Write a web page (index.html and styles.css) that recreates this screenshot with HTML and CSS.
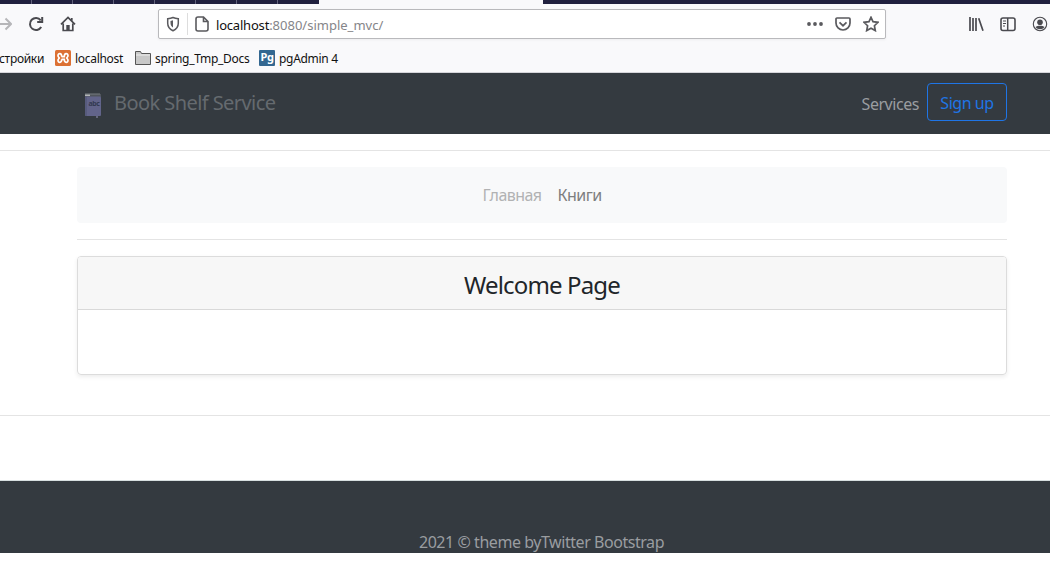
FILE: index.html
```html
<!DOCTYPE html>
<html lang="ru">
<head>
<meta charset="utf-8">
<title>Book Shelf Service</title>
<link rel="stylesheet" href="styles.css">
</head>
<body>
<div class="tabstrip"><div class="tabs"></div><div class="active-tab"></div></div>
<div class="toolbar">
  <div class="tools-left">
    <svg class="forward" width="16" height="16" viewBox="0 0 16 16"><path d="M1 8h14M9.500 2.500L15 8l-5.500 5.500"/></svg>
    <svg width="16" height="16" viewBox="0 0 16 16"><path d="M12.700 4.300A6 6 0 1 0 13.200 11"/><path d="M14.200 1v5H9.200" /></svg>
    <svg width="16" height="16" viewBox="0 0 16 16"><path d="M1 8.300L8 1.500l7 6.800M3.200 7.500v7h9.600v-7M11.800 2v3" stroke-width="1.700"/><path d="M6.300 14V9h3.400v5z" fill="#4a4a4f" stroke="none"/></svg>
  </div>
  <div class="address">
    <svg width="14" height="16" viewBox="0 0 14 16"><path d="M7 1.500c2 .8 3.500 1 5.300 1.200v4.500c0 3.500-2 6-5.300 7.500-3.300-1.500-5.300-4-5.300-7.500V2.700C3.500 2.500 5 2.300 7 1.500z" stroke-width="1.500"/><path d="M7 4.300v7.300c-1.500-1-2.500-2.500-2.500-4.500V4.900z" fill="#5a5a5e" stroke="none"/></svg>
    <span class="divider"></span>
    <svg class="page-icon" width="14" height="16" viewBox="0 0 14 16"><path d="M3 1h5.500L13 5.500V13a2 2 0 0 1-2 2H3a2 2 0 0 1-2-2V3a2 2 0 0 1 2-2zM8.500 1v4.500H13" stroke-width="1.600"/></svg>
    <span class="url"><b>localhost</b>:8080/simple_mvc/</span>
    <div class="address-actions">
      <svg width="16" height="16" viewBox="0 0 16 16"><g fill="#5a5a5e" stroke="none"><circle cx="2" cy="8" r="1.900"/><circle cx="8" cy="8" r="1.900"/><circle cx="14" cy="8" r="1.900"/></g></svg>
      <svg width="16" height="16" viewBox="0 0 16 16"><path d="M2 2h12a1 1 0 0 1 1 1v4a7 7 0 0 1-14 0V3a1 1 0 0 1 1-1z" stroke-width="1.700"/><path d="M4.500 6.300L8 9.700l3.500-3.400" stroke-width="1.700"/></svg>
      <svg width="16" height="16" viewBox="0 0 16 16"><path d="M8 1.300l2 4.400 5 .6-3.600 3.400.9 4.900L8 12.200l-4.300 2.400.9-4.900L1 6.300l5-.6z" stroke-width="1.700"/></svg>
    </div>
  </div>
  <div class="tools-right">
    <svg width="16" height="16" viewBox="0 0 16 16"><path d="M2 1v14M5 2v13M8 2v13M10.700 2.200L15 14.700" stroke-width="1.700"/></svg>
    <svg width="16" height="16" viewBox="0 0 16 16"><rect x="1" y="2" width="14" height="12.500" rx="2" stroke-width="1.600"/><path d="M7.700 2v12" stroke-width="1.500"/><path d="M3 5h3M3 7.500h3M3 10h2" stroke-width="1"/></svg>
    <svg width="16" height="16" viewBox="0 0 16 16"><circle cx="8" cy="8" r="6.700" stroke-width="1.100"/><circle cx="8" cy="6.200" r="2.800" fill="#4a4a4f" stroke="none"/><path d="M3.500 11c2-1.700 7-1.700 9 0-2 3-7 3-9 0z" fill="#4a4a4f" stroke="none"/></svg>
  </div>
</div>
<div class="bookmarks">
  <span class="mark mark-settings">стройки</span>
  <span class="mark mark-local"><svg width="16" height="16" viewBox="0 0 16 16"><rect width="16" height="16" rx="1.500" fill="#dc7033" stroke="none"/><path d="M6.500 6.700H10M6.500 9.300H10M6.700 6.700C6.700 2.500 3 3 3 5.700c0 1 .7 1.500 1.300 2.300C3.700 8.800 3 9.300 3 10.300 3 13 6.700 13.500 6.700 9.300M9.300 6.700c0-4.200 3.700-3.700 3.700-1 0 1-.7 1.500-1.300 2.300.6.800 1.300 1.300 1.300 2.300 0 2.700-3.700 3.200-3.700-1" stroke="#fff" stroke-width="1.700"/></svg><span>localhost</span></span>
  <span class="mark mark-docs"><svg width="16" height="16" viewBox="0 0 16 16"><path d="M.5 14.500v-13h5l1 2h9v11z" fill="#c8c8c8" stroke="#555" stroke-width="1"/><path d="M1 5h14" stroke="#eee" stroke-width="1"/></svg><span>spring_Tmp_Docs</span></span>
  <span class="mark mark-pg"><i class="pg">Pg</i><span>pgAdmin 4</span></span>
</div>
<header class="navbar">
  <div class="container navbar-row">
    <div class="brand">
      <svg width="18" height="26" viewBox="0 0 18 26"><path d="M1 1h16v3H1z" fill="#50555c" stroke="none"/><path d="M1 1h15" stroke="#777c80" stroke-width="1"/><path d="M1 2.300h5" stroke="#b2b5b5" stroke-width="1.500"/><rect x="1" y="3.500" width="16" height="19.500" rx="1" fill="#62648a" stroke="none"/><path d="M2 3.500V23" stroke="#555879" stroke-width="1.500"/><path d="M13 23v2" stroke="#777992" stroke-width="1.500"/><text x="4.500" y="13" class="book-label">abc</text></svg>
      <span>Book Shelf Service</span>
    </div>
    <div class="account"><a class="services">Services</a><a class="signup"><span>Sign up</span></a></div>
  </div>
</header>
<hr>
<main class="container">
  <nav class="menu"><a class="active"><span>Главная</span></a><a><span>Книги</span></a></nav>
  <hr>
  <section class="card"><h4><span>Welcome Page</span></h4><div class="card-body"></div></section>
</main>
<hr class="end-line">
<footer><span>2021 © theme byTwitter Bootstrap</span></footer>
</body>
</html>
```
FILE: styles.css
```css
* { box-sizing: border-box; }
body { margin: 0; height: 582px; overflow: hidden; background: #fff; color: #212529; font: 16px/24px "Noto Sans", "Open Sans", sans-serif; letter-spacing: -.45px; }
svg { display: block; flex: none; fill: none; stroke: #4a4a4f; stroke-width: 2; }
span { white-space: nowrap; }
.tabstrip { display: flex; height: 4px; background: #20203f; }
.tabs { width: 319px; background: repeating-linear-gradient(90deg, transparent 0 40px, #62627c 40px 41px) -9px 0; }
.active-tab { width: 224px; background: #f9f9fb; }
.toolbar { display: flex; align-items: center; height: 41px; background: #f9f9fb; }
.tools-left { display: flex; gap: 16px; width: 158px; margin-left: -4px; }
.tools-left svg { margin-top: -1px; }
.forward { stroke: #b6b6b9; }
.toolbar .address { display: flex; align-items: center; width: 728px; height: 30px; margin: -1px 0 0 4px; padding: 0 6px 0 7px; border: 1px solid #b9b9bc; border-radius: 2px; background: #fff; box-shadow: 0 1px 3px #0000000d; }
.address svg { stroke: #5a5a5e; }
.divider { width: 1px; height: 22px; margin: 0 7px; background: #ddd; }
.url { margin: 2px 0 0 7px; color: #858589; font-size: 13px; letter-spacing: 0; }
.url b { color: #111; font-weight: 400; letter-spacing: -.2px; }
.address-actions { display: flex; gap: 12px; margin-left: auto; }
.tools-right { display: flex; gap: 16px; margin: -2px 0 0 82px; }
.bookmarks { display: flex; align-items: center; height: 28px; background: #f9f9fb; border-bottom: 1px solid #d5d5da; color: #111; font-size: 12px; letter-spacing: -.3px; }
.mark { display: flex; align-items: center; gap: 4px; flex: none; }
.mark svg, .pg { margin-top: -1px; }
.mark-settings { width: 55px; margin-left: -1px; }
.mark-local { width: 80px; margin-left: 1px; }
.mark-docs { width: 124px; }
.pg { width: 16px; height: 16px; border-radius: 1px; background: #336791; color: #fff; font: bold 11px/13px "Noto Sans", sans-serif; text-align: center; letter-spacing: -.5px; }
.container { width: 930px; margin: 0 43px 0 77px; }
.navbar { height: 61px; padding-top: 10px; background: #343a40; }
.navbar-row { display: flex; justify-content: space-between; }
.brand { display: flex; align-items: center; height: 40px; padding-left: 7px; gap: 12px; color: #656a6f; font-size: 20px; letter-spacing: -.57px; }
.brand svg { margin-top: 6px; }
.book-label { font: bold 7px "Noto Sans", sans-serif; letter-spacing: -.4px; fill: #343a52; stroke: none; }
.account { display: flex; align-items: center; gap: 8px; height: 38px; }
.services { padding-top: 3px; color: #9a9da0; }
.signup { width: 80px; height: 38px; border: 1px solid #1f75e6; border-radius: 4px; color: #1f75e6; line-height: 39px; text-align: center; }
hr { height: 1px; margin: 16px 0; border: 0; background: #e4e4e4; }
.menu { display: flex; align-items: center; justify-content: center; gap: 16px; height: 56px; border-radius: 4px; background: #f8f9fa; color: #7d7e7f; letter-spacing: -.55px; }
.menu .active { color: #b1b2b3; }
.card { height: 119px; border: 1px solid #dcdcdc; border-radius: 4px; box-shadow: 0 2px 4px #00000013; overflow: hidden; }
.card h4 { height: 53px; margin: 0; border-bottom: 1px solid #d9d9d9; background: #f7f7f7; font-size: 24px; font-weight: 400; line-height: 55px; text-align: center; letter-spacing: -.85px; }
.end-line { margin: 40px 0 64px; }
footer { height: 73px; border-top: 1px solid #d7dfe0; background: #343a40; color: #9a9da0; padding: 49px 0 0 33px; text-align: center; overflow: hidden; }
```
